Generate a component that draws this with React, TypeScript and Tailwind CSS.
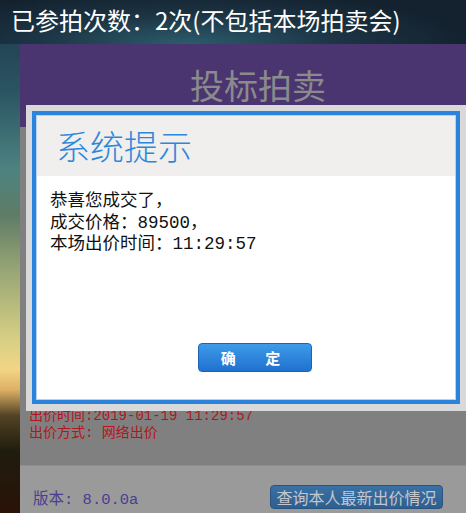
export default function App() {
  return (
    <div className="relative flex h-[513px] w-[466px] flex-col overflow-hidden bg-[linear-gradient(to_bottom,#1d3646_0%,#2b5564_18%,#4c8380_33%,#5f7c66_42%,#94a374_52%,#d6cf84_66%,#f3d585_72%,#dcb065_76%,#524324_81%,#1f1c0e_88%,#2a1208_100%)] font-['Noto_Sans_CJK_SC',sans-serif]">
      {/* top bar */}
      <div className="h-[44px] shrink-0 bg-[radial-gradient(ellipse_60%_120%_at_40%_100%,#2c5c6b_0%,#1c3444_55%,#14222f_100%)] pl-[11px] pt-[3px] text-[24px] leading-[34px] text-white">
        已参拍次数：2次(不包括本场拍卖会)
      </div>

      <div className="flex flex-1">
        <div className="w-[20px] shrink-0" />
        <div className="flex flex-1 flex-col">
          <div className="h-[83px] shrink-0 bg-[#4a3570] pl-[30px] pt-[21px] text-center text-[34px] leading-[40px] text-[#8b8b8b]">
            投标拍卖
          </div>
          <div className="flex flex-1 flex-col justify-end bg-[#808080] pb-[23px] pl-[9px] font-['Liberation_Mono','Noto_Sans_CJK_SC',monospace] text-[14px] leading-[17px] text-[#b3161a]">
            <div>出价时间:2019-01-19 11:29:57</div>
            <div>出价方式: 网络出价</div>
          </div>
          <div className="flex h-[48px] shrink-0 items-end justify-between border-t border-[#8f8f8f] bg-[#9a9a9a] pb-[4px] pl-[13px] pr-[23px]">
            <span className="-mb-[2px] font-['Liberation_Mono','Noto_Sans_CJK_SC',monospace] text-[15.5px] leading-[22px] text-[#4b3d8f]">
              版本: 8.0.0a
            </span>
            <button className="h-[24px] w-[173px] rounded-[4px] border border-[#2a5480] bg-[linear-gradient(to_bottom,#3a70a4,#2e5f90)] text-[16px] leading-[20px] text-[#c3c7cc]">
              查询本人最新出价情况
            </button>
          </div>
        </div>
      </div>

      {/* dialog */}
      <div className="absolute left-[26px] top-[105px] flex h-[306px] w-[440px] flex-col bg-[#d9d9d9] p-[6px] pb-[7px]">
        <div className="flex flex-1 flex-col border-4 border-[#2b83dc]">
          <div className="flex flex-1 flex-col border border-[#b5d2f0]">
            <div className="h-[60px] shrink-0 bg-[#f0efee] pl-[19px] pt-[10px] text-[34px] font-light leading-[40px] text-[#2d88da]">
              系统提示
            </div>
            <div className="flex flex-1 flex-col bg-white pl-[13px] pt-[15px]">
              <div className="font-['Liberation_Mono','Noto_Sans_CJK_SC',monospace] text-[17.5px] leading-[21.5px] text-[#111]">
                <div>恭喜您成交了，</div>
                <div>成交价格：89500，</div>
                <div>本场出价时间：11:29:57</div>
              </div>
              <button className="mb-[27px] ml-[148px] mt-auto h-[29px] w-[114px] rounded-[4px] border border-[#1d62b4] bg-[linear-gradient(to_bottom,#3d9be9,#2171d0)] pl-[4px] text-[15px] font-bold leading-[27px] tracking-[13px] text-white">
                确 定
              </button>
            </div>
          </div>
        </div>
      </div>
    </div>
  );
}
